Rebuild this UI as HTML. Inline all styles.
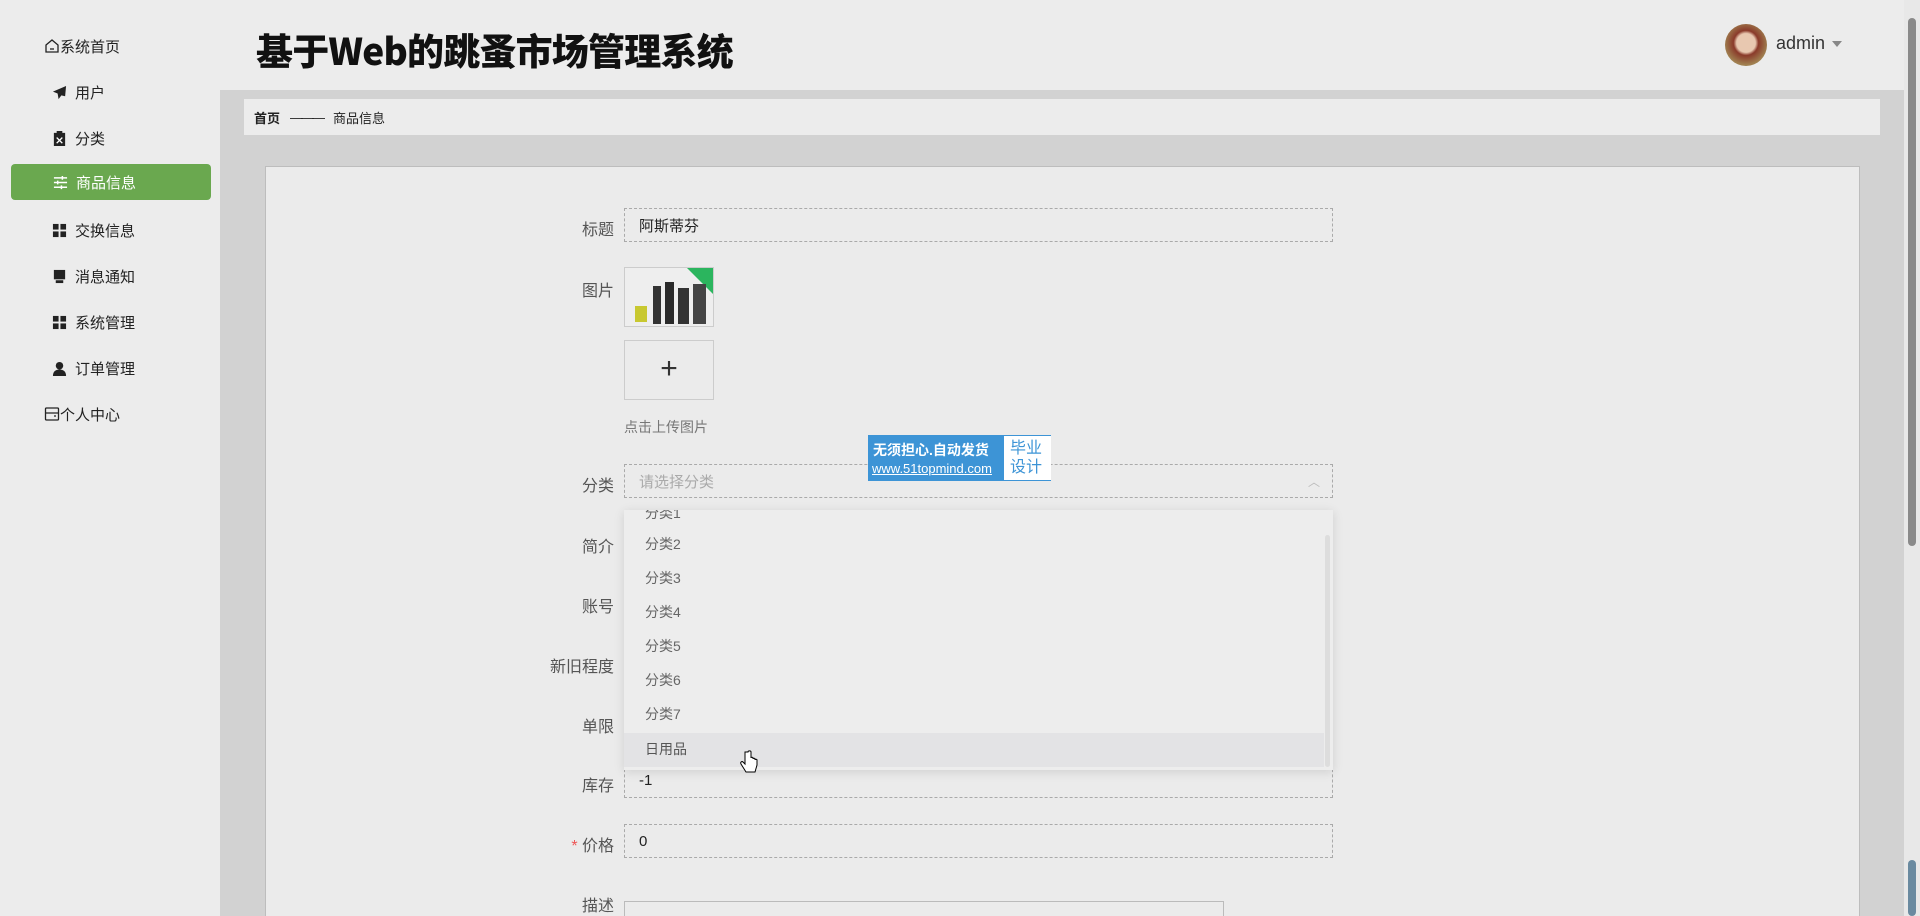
<!DOCTYPE html>
<html><head><meta charset="utf-8"><style>
*{margin:0;padding:0;box-sizing:border-box}
html,body{width:1920px;height:916px;overflow:hidden;background:#d2d2d2}
body{font-family:"Liberation Sans","Noto Sans CJK SC",sans-serif;position:relative;color:#333}
.side{position:absolute;left:0;top:0;width:220px;height:916px;background:#ececec}
.mi{position:absolute;left:0;width:220px;height:36px;font-size:15px;color:#222;display:flex;align-items:center}
.mi svg{margin-right:8px}
.act{left:11px;width:200px;background:#6aa84f;border-radius:4px;color:#fff}
.head{position:absolute;left:220px;top:0;width:1684px;height:90px;background:#ececec}
.title{position:absolute;left:256px;top:22px;font-size:37px;font-weight:900;color:#111;font-family:"Noto Sans CJK SC",sans-serif;letter-spacing:-0.8px}
.bc{position:absolute;left:244px;top:99px;width:1636px;height:36px;background:#ececec;font-size:13px;display:flex;align-items:center;padding-left:10px;color:#222}
.card{position:absolute;left:265px;top:166px;width:1595px;height:760px;background:#ebebeb;border:1px solid #bdbdbd}
.lb{position:absolute;width:120px;left:494px;text-align:right;font-size:16px;color:#555}
.inp{position:absolute;left:624px;width:709px;height:34px;border:1px dashed #aaa;font-size:15px;padding-left:14px;display:flex;align-items:center;color:#222}
.sb{position:absolute;right:0;top:0;width:16px;height:916px;background:#e8e8e8}
.dd{position:absolute;left:624px;top:510px;width:709px;height:260px;background:#ededed;box-shadow:0 2px 10px rgba(0,0,0,.12);overflow:hidden}
.di{position:absolute;left:21px;font-size:14px;color:#666}
</style></head><body>
<div class="side">
 <div class="mi" style="top:28px;left:44px"><svg width="16" height="16" viewBox="0 0 16 16" fill="none" stroke="#222" stroke-width="1.3"><path d="M2 7L8 2l6 5v7H2z"/><path d="M6 11h4"/></svg><span style="margin-left:-8px">系统首页</span></div>
 <div class="mi" style="top:74px;left:52px"><svg width="15" height="15" viewBox="0 0 16 16"><path d="M15 1L1 7l5 2 1 6 3-4 4 1z" fill="#222"/></svg>用户</div>
 <div class="mi" style="top:120px;left:52px"><svg width="15" height="15" viewBox="0 0 16 16"><rect x="2" y="2" width="12" height="14" fill="#222"/><rect x="5" y="0" width="6" height="3" fill="#222"/><path d="M5 7l6 6M11 7l-6 6" stroke="#fff" stroke-width="1.5"/></svg>分类</div>
 <div class="mi act" style="top:164px;padding-left:42px"><svg width="15" height="15" viewBox="0 0 16 16" stroke="#fff" stroke-width="1.6"><path d="M1 3h14M1 8h14M1 13h14"/><path d="M10 1v4M5 6v4M9 11v4"/></svg>商品信息</div>
 <div class="mi" style="top:212px;left:52px"><svg width="15" height="15" viewBox="0 0 16 16" fill="#222"><rect x="1" y="1" width="6" height="6"/><rect x="9" y="1" width="6" height="6"/><rect x="1" y="9" width="6" height="6"/><rect x="9" y="9" width="6" height="6"/></svg>交换信息</div>
 <div class="mi" style="top:258px;left:52px"><svg width="15" height="15" viewBox="0 0 16 16" fill="#222"><rect x="2" y="1" width="12" height="10"/><rect x="4" y="12" width="8" height="3"/></svg>消息通知</div>
 <div class="mi" style="top:304px;left:52px"><svg width="15" height="15" viewBox="0 0 16 16" fill="#222"><rect x="1" y="1" width="6" height="6"/><rect x="9" y="1" width="6" height="6"/><rect x="1" y="9" width="6" height="6"/><rect x="9" y="9" width="6" height="6"/></svg>系统管理</div>
 <div class="mi" style="top:350px;left:52px"><svg width="15" height="15" viewBox="0 0 16 16" fill="#222"><circle cx="8" cy="5" r="4"/><path d="M1 16c0-5 3-7 7-7s7 2 7 7z"/></svg>订单管理</div>
 <div class="mi" style="top:396px;left:44px"><svg width="16" height="16" viewBox="0 0 16 16" fill="none" stroke="#222" stroke-width="1.3"><rect x="1.5" y="2" width="13" height="12" rx="1"/><path d="M1.5 7h13M10 10h2"/></svg><span style="margin-left:-8px">个人中心</span></div>
</div>
<div class="head"></div>
<div class="title">基于Web的跳蚤市场管理系统</div>
<div style="position:absolute;left:1725px;top:24px;width:42px;height:42px;border-radius:50%;background:radial-gradient(circle at 50% 45%,#e8c8b0 0 30%,#8a3a2a 40%,#a08050 70%)"></div>
<div style="position:absolute;left:1776px;top:33px;font-size:18px;color:#333">admin</div>
<div style="position:absolute;left:1832px;top:41px;border:5px solid transparent;border-top:6px solid #888"></div>
<div class="bc"><b>首页</b><span style="margin:0 10px;letter-spacing:-2px">———</span>商品信息</div>
<div class="card"></div>
<div class="lb" style="top:216px">标题</div><div class="inp" style="top:208px">阿斯蒂芬</div>
<div class="lb" style="top:277px">图片</div>
<div style="position:absolute;left:624px;top:267px;width:90px;height:60px;border:1px solid #ccc;background:#eee;overflow:hidden">
 <div style="position:absolute;right:0;top:0;border-left:26px solid transparent;border-top:26px solid #2bb55e"></div>
 <div style="position:absolute;left:10px;top:38px;width:12px;height:16px;background:#c8c830"></div>
 <div style="position:absolute;left:28px;top:18px;width:8px;height:38px;background:#333"></div>
 <div style="position:absolute;left:40px;top:14px;width:9px;height:42px;background:#2a2a2a"></div>
 <div style="position:absolute;left:53px;top:20px;width:11px;height:36px;background:#333"></div>
 <div style="position:absolute;left:68px;top:16px;width:13px;height:40px;background:#444"></div>
</div>
<div style="position:absolute;left:624px;top:340px;width:90px;height:60px;border:1px solid #ccc;font-size:30px;text-align:center;line-height:56px;color:#333;font-weight:300">+</div>
<div style="position:absolute;left:624px;top:417px;font-size:14px;color:#777">点击上传图片</div>
<div class="lb" style="top:472px">分类</div><div class="inp" style="top:464px;color:#aaa">请选择分类<span style="position:absolute;right:12px;color:#bbb;font-size:12px">︿</span></div>
<div class="lb" style="top:533px">简介</div>
<div class="lb" style="top:593px">账号</div>
<div class="lb" style="top:653px">新旧程度</div>
<div class="lb" style="top:713px">单限</div>
<div class="inp" style="top:764px;border-top:none">-1</div>
<div class="lb" style="top:772px">库存</div>
<div class="dd">
 <div class="di" style="top:-7px">分类1</div>
 <div class="di" style="top:24px">分类2</div>
 <div class="di" style="top:58px">分类3</div>
 <div class="di" style="top:92px">分类4</div>
 <div class="di" style="top:126px">分类5</div>
 <div class="di" style="top:160px">分类6</div>
 <div class="di" style="top:194px">分类7</div>
 <div style="position:absolute;left:0;top:223px;width:700px;height:34px;background:#e3e3e5"></div>
 <div class="di" style="top:229px;color:#555">日用品</div>
 <div style="position:absolute;right:3px;top:25px;width:5px;height:232px;background:#ddd;border-radius:3px"></div>
</div>
<div class="lb" style="top:832px"><span style="color:#e55">*</span> 价格</div><div class="inp" style="top:824px">0</div>
<div class="lb" style="top:892px">描述</div>
<div style="position:absolute;left:624px;top:901px;width:600px;height:20px;border:1px solid #bbb"></div>
<div style="position:absolute;left:868px;top:435px;width:183px;height:46px;background:#3d94d6;border:1px solid #3d94d6">
 <div style="position:absolute;left:4px;top:4px;font-size:14px;color:#fff;font-weight:bold">无须担心.自动发货</div>
 <div style="position:absolute;left:3px;top:25px;font-size:13px;color:#fff;text-decoration:underline">www.51topmind.com</div>
 <div style="position:absolute;left:135px;top:0;width:47px;height:44px;background:#fff;color:#3d94d6;font-size:16px;line-height:19px;padding:3px 0 0 6px">毕业<br>设计</div>
</div>
<svg style="position:absolute;left:740px;top:750px" width="18" height="24" viewBox="0 0 18 24"><path d="M5 2v12l-2-2c-1-1-3 0-2 2l5 8h9l2-7V10c0-1-2-1-2 0V9c0-1-2-1-2 0V8c0-1-2-1-2 0V2c0-1.5-3-1.5-3 0z" fill="#fff" stroke="#000" stroke-width="1"/></svg>
<div class="sb"><div style="position:absolute;left:4px;top:18px;width:8px;height:528px;background:#8a8a8a;border-radius:4px"></div><div style="position:absolute;left:4px;top:860px;width:8px;height:56px;background:#6a8aa0;border-radius:4px"></div></div>
</body></html>
